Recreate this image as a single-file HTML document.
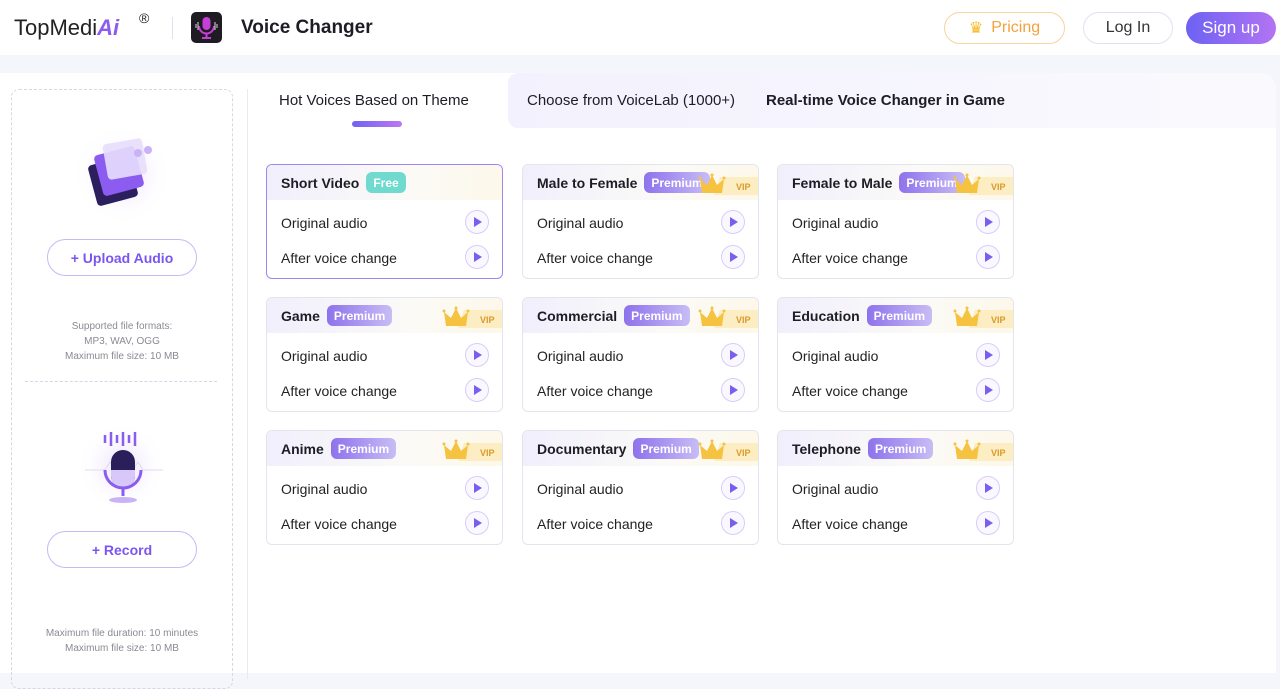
<!DOCTYPE html>
<html><head><meta charset="utf-8"><style>
*{box-sizing:border-box;margin:0;padding:0}
body{width:1280px;height:678px;overflow:hidden;background:#f5f6fb;font-family:"Segoe UI","Liberation Sans",sans-serif;color:#1d1d26;position:relative}
.hdr{position:absolute;left:0;top:0;width:1280px;height:55px;background:#fff}
.abs{position:absolute}
.btn{position:absolute;top:12px;height:32px;border-radius:16px;font-size:16px;display:flex;align-items:center;justify-content:center}
.main{position:absolute;left:0;top:73px;width:1276px;height:600px;background:#fff;border-radius:0 16px 0 0}
.left{position:absolute;left:11px;top:89px;width:222px;height:600px;border:1px dashed #d3d8e6;border-radius:8px}
.pbtn{position:absolute;left:47px;width:150px;height:37px;border:1.5px solid #c9b8f7;border-radius:19px;color:#7a55ef;font-weight:bold;font-size:14px;display:flex;align-items:center;justify-content:center}
.small{position:absolute;width:222px;left:11px;text-align:center;font-size:10px;color:#8a8a93;line-height:15px}
.card{position:absolute;width:237px;height:115px;border:1px solid #e3e5ee;border-radius:6px;background:#fff;overflow:hidden}
.card.sel{border:1.5px solid #9f86f0}
.ch{height:35px;background:linear-gradient(90deg,#f1effc,#fbfaf7 60%,#fdf8ea);display:flex;align-items:center;padding-left:14px;font-weight:bold;font-size:14px;position:relative;margin-bottom:5px}
.tag{margin-left:7px;height:21px;border-radius:6px;padding:0 7px;font-size:12px;font-weight:bold;color:#fff;display:flex;align-items:center;background:linear-gradient(90deg,#8e72ec,#c8bdf5)}
.tag.free{background:#6fdacd}
.row{height:35px;display:flex;align-items:center;padding-left:14px;font-size:14px;position:relative;color:#222}
.play{position:absolute;right:13px;top:5px;width:24px;height:24px;border-radius:50%;border:1.5px solid #d7ccf9;background:#faf8ff}
.play:after{content:"";position:absolute;left:8px;top:6px;border-left:8px solid #7b5ef0;border-top:5px solid transparent;border-bottom:5px solid transparent}
.vip{position:absolute;right:0;top:8px;width:60px;height:22px}
</style></head><body>
<div class="hdr"></div>
<div class="abs" style="left:14px;top:15px;font-size:22px;color:#222">TopMedi<span style="color:#8a5cf0;font-style:italic;font-weight:bold">Ai</span></div>
<div class="abs" style="left:139px;top:10px;font-size:14px">®</div>
<div class="abs" style="left:172px;top:17px;width:1px;height:22px;background:#dde3ee"></div>
<div class="abs" style="left:191px;top:12px;width:31px;height:31px;border-radius:5px;background:#1e1b22">
<svg width="31" height="31" viewBox="0 0 31 31"><rect x="11.5" y="5" width="8" height="13" rx="4" fill="#c63fd6"/><path d="M8 14a7.5 7.5 0 0 0 15 0M15.5 21.5v4M11 26h9" stroke="#c63fd6" stroke-width="2" fill="none"/><path d="M5 12v4M7 10v8M24 10v8M26 12v4" stroke="#bbb" stroke-width="1.2"/></svg></div>
<div class="abs" style="left:241px;top:17px;font-size:19px;font-weight:bold">Voice Changer</div>
<div class="btn" style="left:944px;width:121px;border:1px solid #f9d3a0;color:#f5a13d"><span style="color:#f5b91e;margin-right:8px">♛</span>Pricing</div>
<div class="btn" style="left:1083px;width:90px;border:1px solid #dde3ee;color:#333">Log In</div>
<div class="btn" style="left:1186px;width:90px;height:32px;background:linear-gradient(90deg,#6d62f3,#b274f3);color:#fff;font-size:17px">Sign up</div>

<div class="main"></div>
<div class="abs" style="left:508px;top:73px;width:768px;height:55px;background:linear-gradient(90deg,#f3f1fd,#fafafe);border-radius:10px 16px 0 10px"></div>
<div class="abs" style="left:248px;top:73px;width:260px;height:55px;background:#fff;border-radius:0 14px 0 0"></div>
<div class="abs" style="left:279px;top:92px;font-size:15px">Hot Voices Based on Theme</div>
<div class="abs" style="left:352px;top:121px;width:50px;height:6px;border-radius:3px;background:linear-gradient(90deg,#6e63f2,#bd77f4)"></div>
<div class="abs" style="left:527px;top:92px;font-size:15px">Choose from VoiceLab (1000+)</div>
<div class="abs" style="left:766px;top:92px;font-size:15px;font-weight:bold">Real-time Voice Changer in Game</div>
<div class="abs" style="left:247px;top:89px;width:1px;height:590px;background:#e8eaf2"></div>

<div class="left"></div>
<svg class="abs" style="left:70px;top:125px" width="110" height="100" viewBox="0 0 110 100"><defs><radialGradient id="g"><stop offset="0" stop-color="#e9defc"/><stop offset="1" stop-color="#fff" stop-opacity="0"/></radialGradient></defs><circle cx="52" cy="50" r="50" fill="url(#g)"/><rect x="22" y="35" width="42" height="42" rx="4" transform="rotate(-15 43 56)" fill="#2c1f5e"/><rect x="28" y="25" width="42" height="42" rx="4" transform="rotate(-15 49 46)" fill="#8c5cf0"/><rect x="35" y="16" width="40" height="36" rx="4" transform="rotate(-10 55 34)" fill="#e7defc" opacity=".9"/><circle cx="68" cy="28" r="4" fill="#c9b3f5"/><circle cx="78" cy="25" r="4" fill="#c9b3f5"/></svg>
<div class="pbtn" style="top:239px">+ Upload Audio</div>
<div class="small" style="top:319px">Supported file formats:<br>MP3, WAV, OGG<br>Maximum file size: 10 MB</div>
<div class="abs" style="left:25px;top:381px;width:192px;border-top:1px dashed #d3d8e6"></div>
<svg class="abs" style="left:75px;top:420px" width="95" height="95" viewBox="0 0 95 95"><circle cx="47" cy="47" r="45" fill="url(#g)"/><path d="M10 50h20l5-8 5 8M58 50l5-8 5 8h20" stroke="#e0daf0" fill="none"/><path d="M30 15v8M36 12v14M42 15v8M48 12v14M54 15v8M60 12v14" stroke="#8a5cf0" stroke-width="2.5"/><rect x="36" y="30" width="24" height="38" rx="12" fill="#2a1f5a"/><path d="M36 50h24v6a12 12 0 0 1-24 0z" fill="#d8c8fa"/><path d="M30 50a18 18 0 0 0 36 0M48 68v8" stroke="#8a5cf0" stroke-width="3" fill="none"/><ellipse cx="48" cy="80" rx="14" ry="3" fill="#c9b3f5"/></svg>
<div class="pbtn" style="top:531px">+ Record</div>
<div class="small" style="top:626px">Maximum file duration: 10 minutes<br>Maximum file size: 10 MB</div>

<svg width="0" height="0" style="position:absolute"><defs><symbol id="v" viewBox="0 0 60 22"><path d="M22 4h38v18H16z" fill="#fbeab8" opacity=".8"/><path d="M4 20L2 6l7 6 5-10 5 10 7-6-2 14z" fill="#f6c341"/><circle cx="2" cy="5" r="1.5" fill="#f6c341"/><circle cx="14" cy="2" r="1.5" fill="#f6c341"/><circle cx="26" cy="5" r="1.5" fill="#f6c341"/><text x="38" y="17" font-size="9" font-family="Liberation Sans" fill="#d99b2b">VIP</text></symbol></defs></svg>

<div class="card sel" style="left:266px;top:164px"><div class="ch">Short Video<span class="tag free">Free</span></div><div class="row">Original audio<span class="play"></span></div><div class="row">After voice change<span class="play"></span></div></div>
<div class="card" style="left:522px;top:164px"><div class="ch">Male to Female<span class="tag">Premium</span><svg class="vip"><use href="#v"/></svg></div><div class="row">Original audio<span class="play"></span></div><div class="row">After voice change<span class="play"></span></div></div>
<div class="card" style="left:777px;top:164px"><div class="ch">Female to Male<span class="tag">Premium</span><svg class="vip"><use href="#v"/></svg></div><div class="row">Original audio<span class="play"></span></div><div class="row">After voice change<span class="play"></span></div></div>
<div class="card" style="left:266px;top:297px"><div class="ch">Game<span class="tag">Premium</span><svg class="vip"><use href="#v"/></svg></div><div class="row">Original audio<span class="play"></span></div><div class="row">After voice change<span class="play"></span></div></div>
<div class="card" style="left:522px;top:297px"><div class="ch">Commercial<span class="tag">Premium</span><svg class="vip"><use href="#v"/></svg></div><div class="row">Original audio<span class="play"></span></div><div class="row">After voice change<span class="play"></span></div></div>
<div class="card" style="left:777px;top:297px"><div class="ch">Education<span class="tag">Premium</span><svg class="vip"><use href="#v"/></svg></div><div class="row">Original audio<span class="play"></span></div><div class="row">After voice change<span class="play"></span></div></div>
<div class="card" style="left:266px;top:430px"><div class="ch">Anime<span class="tag">Premium</span><svg class="vip"><use href="#v"/></svg></div><div class="row">Original audio<span class="play"></span></div><div class="row">After voice change<span class="play"></span></div></div>
<div class="card" style="left:522px;top:430px"><div class="ch">Documentary<span class="tag">Premium</span><svg class="vip"><use href="#v"/></svg></div><div class="row">Original audio<span class="play"></span></div><div class="row">After voice change<span class="play"></span></div></div>
<div class="card" style="left:777px;top:430px"><div class="ch">Telephone<span class="tag">Premium</span><svg class="vip"><use href="#v"/></svg></div><div class="row">Original audio<span class="play"></span></div><div class="row">After voice change<span class="play"></span></div></div>
</body></html>
